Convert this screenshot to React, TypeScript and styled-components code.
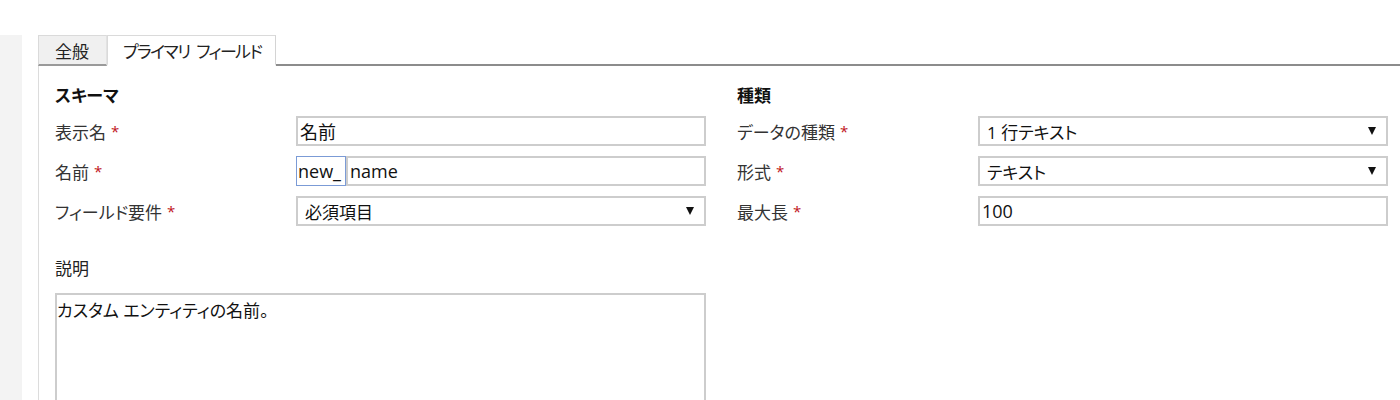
import React, { useState } from 'react';
import styled, { createGlobalStyle } from 'styled-components';

const GlobalStyle = createGlobalStyle`
  html, body {
    margin: 0;
    padding: 0;
    background: #ffffff;
  }
  body {
    font-family: "Open Sans", "Noto Sans CJK JP", sans-serif;
    font-size: 17px;
    color: #222222;
    font-feature-settings: "palt";
  }
`;

type Field = {
  label: string;
  required?: boolean;
  kind: 'text' | 'select' | 'prefixed';
  value: string;
  prefix?: string;
};

const schemaFields: Field[] = [
  { label: '表示名', required: true, kind: 'text', value: '名前' },
  { label: '名前', required: true, kind: 'prefixed', prefix: 'new_', value: 'name' },
  { label: 'フィールド要件', required: true, kind: 'select', value: '必須項目' },
];

const typeFields: Field[] = [
  { label: 'データの種類', required: true, kind: 'select', value: '1 行テキスト' },
  { label: '形式', required: true, kind: 'select', value: 'テキスト' },
  { label: '最大長', required: true, kind: 'text', value: '100' },
];

const tabs = ['全般', 'プライマリ フィールド'];

const FieldRow = ({ field }: { field: Field }): JSX.Element => {
  return (
    <Row>
      <Label>
        {field.label}
        {field.required && <Required>*</Required>}
      </Label>
      {field.kind === 'text' && <TextBox>{field.value}</TextBox>}
      {field.kind === 'select' && (
        <SelectBox>
          <span>{field.value}</span>
          <Arrow />
        </SelectBox>
      )}
      {field.kind === 'prefixed' && (
        <Prefixed>
          <PrefixBox>{field.prefix}</PrefixBox>
          <TextBox $grow>{field.value}</TextBox>
        </Prefixed>
      )}
    </Row>
  );
};

export default function App(): JSX.Element {
  const [active, setActive] = useState(1);

  return (
    <>
      <GlobalStyle />
      <Page>
        <SideStrip />
        <Main>
          <TabBar>
            {tabs.map((t, idx) => (
              <Tab key={t} $active={idx === active} onClick={() => setActive(idx)}>
                {t}
              </Tab>
            ))}
            <TabFiller />
          </TabBar>
          <Panel>
            <Column>
              <SectionTitle>スキーマ</SectionTitle>
              <Rows>
                {schemaFields.map((f) => (
                  <FieldRow key={f.label} field={f} />
                ))}
              </Rows>
              <DescTitle>説明</DescTitle>
              <TextArea>カスタム エンティティの名前。</TextArea>
            </Column>
            <Column>
              <SectionTitle>種類</SectionTitle>
              <Rows>
                {typeFields.map((f) => (
                  <FieldRow key={f.label} field={f} />
                ))}
              </Rows>
            </Column>
          </Panel>
        </Main>
      </Page>
    </>
  );
}

const Page = styled.div`
  display: flex;
  gap: 16px;
  margin-top: 35px;
  height: 365px;
  overflow: hidden;
`;

const SideStrip = styled.div`
  width: 22px;
  flex: none;
  background: #f3f3f3;
`;

const Main = styled.div`
  flex: 1;
  display: flex;
  flex-direction: column;
`;

const TabBar = styled.div`
  flex: none;
  display: flex;
  align-items: stretch;
  height: 31px;
`;

const Tab = styled.div<{ $active: boolean }>`
  display: flex;
  align-items: center;
  padding: 0 ${(p) => (p.$active ? '14px' : '17px')} 0 ${(p) => (p.$active ? '15px' : '16px')};
  background: ${(p) => (p.$active ? '#ffffff' : '#f0f0f0')};
  border-top: 1px solid #dadada;
  border-left: 1px solid #dadada;
  border-right: 1px solid ${(p) => (p.$active ? '#d4d4d4' : '#e2e2e2')};
  border-bottom: ${(p) => (p.$active ? '2px solid transparent' : '2px solid #9a9a9a')};
  letter-spacing: ${(p) => (p.$active ? '-1.6px' : '0')};
  word-spacing: ${(p) => (p.$active ? '4px' : '0')};
  color: #222222;
  cursor: pointer;
  white-space: pre;
`;

const TabFiller = styled.div`
  flex: 1;
  border-bottom: 2px solid #8c8c8c;
`;

const Panel = styled.div`
  flex: 1;
  display: flex;
  gap: 31px;
  padding: 20px 0 0 16px;
  border-left: 1px solid #dcdcdc;
`;

const Column = styled.div`
  width: 651px;
  display: flex;
  flex-direction: column;
`;

const SectionTitle = styled.div`
  font-weight: bold;
  line-height: 20px;
  height: 20px;
  margin-bottom: 10px;
  color: #111111;
`;

const DescTitle = styled(SectionTitle)`
  font-weight: normal;
  margin-top: 33px;
  margin-bottom: 14px;
  color: #222222;
`;

const Rows = styled.div`
  display: flex;
  flex-direction: column;
  gap: 10px;
`;

const Row = styled.div`
  display: flex;
  align-items: center;
  height: 30px;
`;

const Label = styled.div`
  width: 241px;
  flex: none;
  color: #333333;
  white-space: nowrap;
`;

const Required = styled.span`
  color: #c0141b;
  margin-left: 5px;
  font-size: 15px;
  position: relative;
  top: -2px;
`;

const BoxBase = styled.div`
  box-sizing: border-box;
  height: 30px;
  display: flex;
  align-items: center;
  border: 2px solid #cdcdcd;
  background: #ffffff;
  color: #111111;
  white-space: nowrap;
`;

const TextBox = styled(BoxBase)<{ $grow?: boolean }>`
  flex: ${(p) => (p.$grow ? '1' : 'none')};
  width: ${(p) => (p.$grow ? 'auto' : '410px')};
  padding-left: 2px;
  font-size: 18px;
`;

const SelectBox = styled(BoxBase)`
  width: 410px;
  justify-content: space-between;
  padding: 0 10px 0 7px;
`;

const Arrow = styled.span`
  width: 0;
  height: 0;
  border-left: 4px solid transparent;
  border-right: 4px solid transparent;
  border-top: 8px solid #111111;
`;

const Prefixed = styled.div`
  width: 410px;
  display: flex;
`;

const PrefixBox = styled.div`
  box-sizing: border-box;
  width: 50px;
  height: 30px;
  display: flex;
  align-items: center;
  padding-left: 1px;
  border: 1px solid #7b9bd6;
  color: #111111;
  font-size: 18px;
`;

const TextArea = styled.div`
  box-sizing: border-box;
  width: 651px;
  height: 140px;
  border: 2px solid #cdcdcd;
  padding: 6px 0 0 0;
  line-height: 20px;
  color: #111111;
`;
